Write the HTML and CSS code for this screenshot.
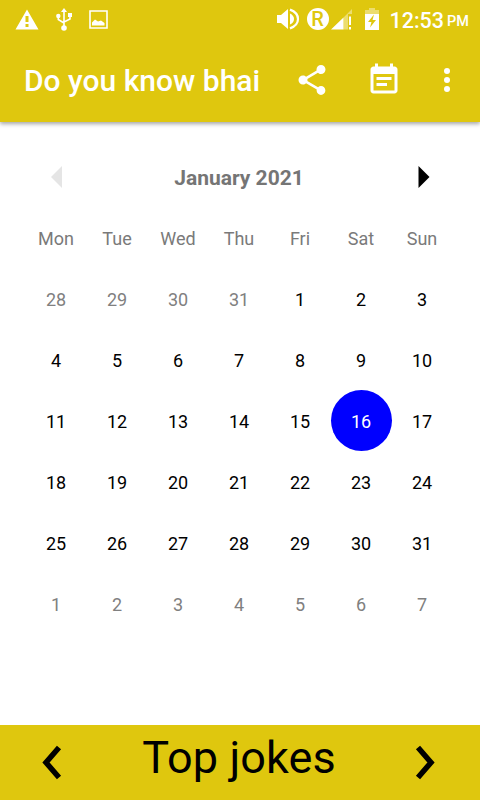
FILE: index.html
```html
<!DOCTYPE html>
<html lang="en">
<head>
    <meta charset="UTF-8">
    <meta name="viewport" content="width=device-width, initial-scale=1.0">
    <title>Do you know bhai</title>
    <link rel="stylesheet" href="styles.css">
</head>
<body>
    <header class="header">
        <div class="status-bar">
            <svg class="warning-icon" width="24" height="21" viewBox="0 0 24 21">
                <path fill-rule="evenodd" d="M12 0.5L23.5 20.5H0.5ZM10.5 7V13H13.5V7ZM10.5 15V18H13.5V15Z"/>
            </svg>
            <svg class="usb-icon" width="16" height="23" viewBox="0 0 16 23">
                <path d="M8 0L11 4H5ZM12 5H16V9H12Z"/>
                <circle cx="2.3" cy="8" r="2.2"/>
                <circle cx="8" cy="20" r="2.8"/>
                <path class="line" d="M8 3V19M2.3 8V11.5L8 15M14 8V11L8 14"/>
            </svg>
            <svg class="picture-icon" width="19" height="19" viewBox="0 0 19 19">
                <path class="line" d="M1 1H18V18H1Z"/>
                <path d="M3 15.5V12.5L6 9.5L9 11.5L12 10.5L15.5 13V15.5Z"/>
            </svg>
            <span class="spacer"></span>
            <svg class="volume-icon" width="24" height="24" viewBox="0 0 24 24">
                <path d="M1 8V16H5L12 22V2L5 8ZM14 6.5Q18 8.5 18 12T14 17.5Z"/>
                <path class="thick-line" d="M14 2.6Q22 5.5 22 12T14 21.4"/>
            </svg>
            <span class="roaming">R</span>
            <svg class="signal-icon" width="21" height="21" viewBox="0 0 21 21">
                <path class="faded" d="M12.5 8.5L21 0V5H17V20.5H12.5Z"/>
                <path d="M0 20.5L12.5 8.5V20.5ZM18 7.5H20V16H18ZM18 18H20V20.5H18Z"/>
            </svg>
            <svg class="battery-icon" width="14" height="22" viewBox="0 0 14 22">
                <path class="faded" d="M0 2H4V0H10V2H14V6H0Z"/>
                <path fill-rule="evenodd" d="M0 6H14V22H0ZM9 6.5L3 14H6.5L5 19.5L11 12H7.5Z"/>
            </svg>
            <span class="time">12:53</span>
            <span class="period">PM</span>
        </div>
        <div class="toolbar">
            <h1 class="title">Do you know bhai</h1>
            <span class="spacer"></span>
            <svg class="share-icon" width="36" height="36" viewBox="0 0 24 24">
                <path d="M18 16.08c-.76 0-1.44.3-1.96.77L8.91 12.7c.05-.23.09-.46.09-.7s-.04-.47-.09-.7l7.05-4.11c.54.5 1.25.81 2.04.81 1.66 0 3-1.34 3-3s-1.34-3-3-3-3 1.34-3 3c0 .24.04.47.09.7L8.04 9.81C7.5 9.31 6.79 9 6 9c-1.66 0-3 1.34-3 3s1.34 3 3 3c.79 0 1.5-.31 2.04-.81l7.12 4.16c-.05.21-.08.43-.08.65 0 1.61 1.31 2.92 2.92 2.92s2.92-1.31 2.92-2.92-1.31-2.92-2.92-2.92z"/>
            </svg>
            <svg class="event-icon" width="36" height="36" viewBox="0 0 24 24">
                <path d="M17 10H7v2h10v-2zm2-7h-1V1h-2v2H8V1H6v2H5c-1.11 0-1.99.9-1.99 2L3 19c0 1.1.89 2 2 2h14c1.1 0 2-.9 2-2V5c0-1.1-.9-2-2-2zm0 16H5V8h14v11zm-5-5H7v2h7v-2z"/>
            </svg>
            <svg class="more-icon" width="36" height="36" viewBox="0 0 24 24">
                <circle cx="12" cy="6" r="2"/>
                <circle cx="12" cy="12" r="2"/>
                <circle cx="12" cy="18" r="2"/>
            </svg>
        </div>
    </header>

    <main class="calendar">
        <div class="month-row">
            <svg class="month-prev" width="61" height="61" viewBox="0 0 61 61">
                <path d="M36 20V42L25 31Z"/>
            </svg>
            <h2 class="month">January 2021</h2>
            <svg class="month-next" width="61" height="61" viewBox="0 0 61 61">
                <path d="M27.5 20V42L38.5 31Z"/>
            </svg>
        </div>
        <div class="days" id="days"></div>
    </main>

    <footer class="footer">
        <svg class="chevron" width="22" height="40" viewBox="0 0 22 40">
            <path d="M17 4.5L4 19.5L17 34.5"/>
        </svg>
        <span class="footer-title">Top jokes</span>
        <svg class="chevron" width="22" height="40" viewBox="0 0 22 40">
            <path d="M4 4.5L17 19.5L4 34.5"/>
        </svg>
    </footer>

    <script>
        const WEEKDAYS = ['Mon', 'Tue', 'Wed', 'Thu', 'Fri', 'Sat', 'Sun'];
        const SELECTED_DAY = 16;
        const days = document.getElementById('days');

        function addCell(text, className) {
            const cell = document.createElement('div');
            const label = document.createElement('span');
            cell.className = className;
            label.textContent = text;
            cell.appendChild(label);
            days.appendChild(cell);
        }

        WEEKDAYS.forEach(name => addCell(name, 'cell weekday'));

        // Six weeks, starting on Monday 28 December
        for (let i = 0; i < 42; i++) {
            const date = new Date(2020, 11, 28 + i);
            let className = 'cell';
            if (date.getMonth() !== 0) {
                className += ' other-month';
            } else if (date.getDate() === SELECTED_DAY) {
                className += ' selected';
            }
            addCell(date.getDate(), className);
        }
    </script>
</body>
</html>
```

FILE: styles.css
```css
body {
    margin: 0;
    height: 800px;
    display: flex;
    flex-direction: column;
    overflow: hidden;
    background-color: white;
    font-family: Roboto, sans-serif;
}

svg {
    flex: none;
}

.header {
    height: 122px;
    background-color: #dfc70e;
    color: white;
    box-shadow: 0 2px 4px rgba(0, 0, 0, 0.35);
}

.header svg {
    fill: white;
}

.header .line {
    fill: none;
    stroke: white;
    stroke-width: 1.6;
}

.header .thick-line {
    fill: none;
    stroke: white;
    stroke-width: 2.2;
}

.faded {
    opacity: 0.4;
}

.spacer {
    flex: 1;
}

.status-bar {
    display: flex;
    align-items: center;
    height: 38px;
    padding: 0 11px 0 15px;
    box-sizing: border-box;
}

.usb-icon {
    margin: 1px 0 0 17px;
}

.picture-icon {
    margin-left: 17px;
}

.roaming {
    width: 22px;
    height: 22px;
    margin-left: 7px;
    border-radius: 50%;
    background-color: white;
    color: #dfc70e;
    font-size: 20px;
    font-weight: 500;
    line-height: 22px;
    text-align: center;
}

.signal-icon {
    margin-left: 2px;
}

.battery-icon {
    margin: 0 11px 0 13px;
}

.time {
    padding-top: 2px;
    font-size: 21.5px;
    font-weight: 500;
}

.period {
    margin-left: 3px;
    padding-top: 5px;
    font-size: 14.5px;
    font-weight: 500;
}

.toolbar {
    display: flex;
    align-items: center;
    height: 84px;
    padding: 0 15px 0 24px;
}

.title {
    margin: 0;
    font-size: 30px;
    font-weight: 500;
}

.event-icon {
    margin: 0 27px 0 36px;
}

.calendar {
    flex: 1;
    padding: 24px 27.5px 0 25.5px;
}

.month-row {
    display: flex;
    justify-content: space-between;
    align-items: center;
    height: 61px;
}

.month {
    margin: 2px 0 0;
    font-size: 21px;
    font-weight: 700;
    color: #757575;
}

.month-prev {
    fill: #e5e5e5;
}

.days {
    display: grid;
    grid-template-columns: repeat(7, 61px);
    grid-auto-rows: 61px;
}

.cell {
    display: flex;
    justify-content: center;
    align-items: center;
    padding-top: 2px;
    box-sizing: border-box;
    font-size: 18px;
    color: black;
}

.weekday {
    color: #7a7a7a;
}

.other-month {
    color: #808080;
}

.selected {
    border-radius: 50%;
    background-color: blue;
    color: white;
}

.footer {
    display: flex;
    justify-content: space-between;
    align-items: center;
    height: 75px;
    padding: 0 44px 0 42px;
    background-color: #dfc70e;
}

.footer-title {
    margin-bottom: 10px;
    font-size: 45px;
    letter-spacing: 0.1px;
}

.chevron {
    fill: none;
    stroke: black;
    stroke-width: 5.5;
}
```
